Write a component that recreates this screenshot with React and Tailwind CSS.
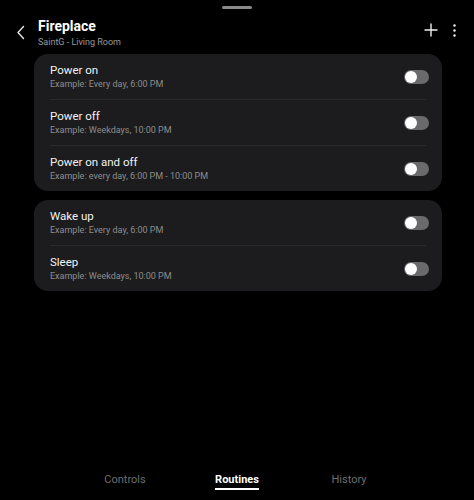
import React from 'react';

const Toggle = () => (
  <div className="w-[25px] h-[14px] rounded-full bg-[#6a6a6c] flex items-center px-[1px]">
    <div className="w-[12px] h-[12px] rounded-full bg-white" />
  </div>
);

const Row = ({ title, sub }) => (
  <div className="h-[45px] pl-[16px] pr-[13px] flex items-center justify-between">
    <div className="flex flex-col">
      <p className="text-[11.5px] leading-[15px] text-[#f2f2f2]">{title}</p>
      <p className="text-[9px] leading-[12px] text-[#8c8c8c]">{sub}</p>
    </div>
    <Toggle />
  </div>
);

const Divider = () => <div className="mx-[16px] h-px bg-[#2a2a2c]" />;

export default function App() {
  return (
    <div className="w-[474px] h-[500px] bg-black flex flex-col" style={{ fontFamily: 'Roboto, "Noto Sans", sans-serif' }}>
      {/* drag handle */}
      <div className="flex justify-center pt-[6px]">
        <div className="w-[30px] h-[3px] rounded-full bg-[#8a8a8a]" />
      </div>

      {/* header */}
      <div className="h-[45px] flex items-start pt-[8px]">
        <div className="w-[38px] flex justify-center pt-[8px] pl-[4px]">
          <svg width="10" height="15" viewBox="0 0 10 15" fill="none" stroke="#e5e5e5" strokeWidth="1.4" strokeLinecap="round" strokeLinejoin="round">
            <path d="M7.5 1.5 L2 7.5 L7.5 13.5" />
          </svg>
        </div>
        <div className="flex flex-col flex-1">
          <p className="text-[14px] leading-[19px] font-bold text-white">Fireplace</p>
          <p className="text-[9px] leading-[12px] text-[#9a9a9a]">SaintG - Living Room</p>
        </div>
        <div className="flex items-center gap-[15px] pt-[6px] pr-[18px]">
          <svg width="14" height="14" viewBox="0 0 14 14" stroke="#f0f0f0" strokeWidth="1.4" strokeLinecap="round">
            <path d="M7 1 V13 M1 7 H13" />
          </svg>
          <svg width="3" height="13" viewBox="0 0 3 13" fill="#f0f0f0">
            <circle cx="1.5" cy="1.5" r="1.2" />
            <circle cx="1.5" cy="6.5" r="1.2" />
            <circle cx="1.5" cy="11.5" r="1.2" />
          </svg>
        </div>
      </div>

      {/* cards */}
      <div className="pl-[34px] pr-[32px] flex flex-col gap-[9px]">
        <div className="bg-[#1c1c1e] rounded-[14px]">
          <Row title="Power on" sub="Example: Every day, 6:00 PM" />
          <Divider />
          <Row title="Power off" sub="Example: Weekdays, 10:00 PM" />
          <Divider />
          <Row title="Power on and off" sub="Example: every day, 6:00 PM - 10:00 PM" />
        </div>
        <div className="bg-[#1c1c1e] rounded-[14px]">
          <Row title="Wake up" sub="Example: Every day, 6:00 PM" />
          <Divider />
          <Row title="Sleep" sub="Example: Weekdays, 10:00 PM" />
        </div>
      </div>

      {/* tabs */}
      <div className="mt-auto h-[40px] flex justify-center items-start pt-[13px]">
        <div className="w-[112px] flex justify-center">
          <span className="text-[11px] leading-[14px] text-[#6e6e6e]">Controls</span>
        </div>
        <div className="w-[112px] flex justify-center">
          <span className="text-[11px] leading-[14px] font-bold text-white border-b-2 border-white pb-[1px]">Routines</span>
        </div>
        <div className="w-[112px] flex justify-center">
          <span className="text-[11px] leading-[14px] text-[#6e6e6e]">History</span>
        </div>
      </div>
    </div>
  );
}
